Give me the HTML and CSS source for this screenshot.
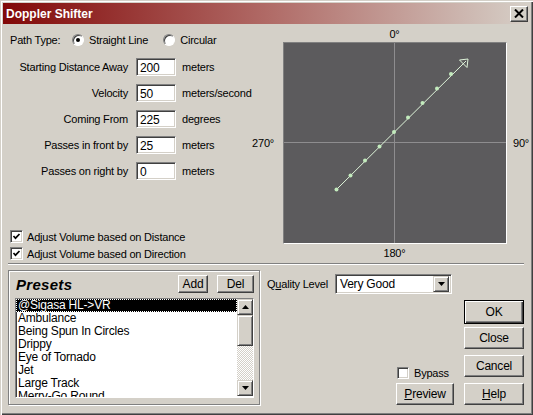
FILE: index.html
```html
<!DOCTYPE html>
<html lang="en">
<head>
    <meta charset="UTF-8">
    <title>Doppler Shifter</title>
    <link rel="stylesheet" href="styles.css">
</head>
<body>
    <div class="window">
        <div class="titlebar">
            <span class="title">Doppler Shifter</span>
            <span class="close-btn">
                <svg width="10" height="9" viewBox="0 0 10 9"><path d="M1 0.5 L9 8.5 M9 0.5 L1 8.5" stroke="#000" stroke-width="2"/></svg>
            </span>
        </div>

        <div class="content">
            <div class="top">
                <div class="settings">
                    <div class="path-row">
                        <span class="path-label">Path Type:</span>
                        <span class="radio"><span class="radio-box checked"></span>Straight Line</span>
                        <span class="radio"><span class="radio-box"></span>Circular</span>
                    </div>

                    <div class="fields">
                        <span class="field-label">Starting Distance Away</span>
                        <span class="input">200</span>
                        <span class="unit">meters</span>

                        <span class="field-label">Velocity</span>
                        <span class="input">50</span>
                        <span class="unit">meters/second</span>

                        <span class="field-label">Coming From</span>
                        <span class="input">225</span>
                        <span class="unit">degrees</span>

                        <span class="field-label">Passes in front by</span>
                        <span class="input">25</span>
                        <span class="unit">meters</span>

                        <span class="field-label">Passes on right by</span>
                        <span class="input">0</span>
                        <span class="unit">meters</span>
                    </div>

                    <div class="checks">
                        <div class="check"><span class="check-box checked"><svg width="9" height="9" viewBox="0 0 9 9"><polyline points="1.5,4 3.5,6.2 7.5,2" fill="none" stroke="#000" stroke-width="1.7"/></svg></span>Adjust Volume based on Distance</div>
                        <div class="check"><span class="check-box checked"><svg width="9" height="9" viewBox="0 0 9 9"><polyline points="1.5,4 3.5,6.2 7.5,2" fill="none" stroke="#000" stroke-width="1.7"/></svg></span>Adjust Volume based on Direction</div>
                    </div>
                </div>

                <div class="compass">
                    <span></span>
                    <span class="deg deg-top">0°</span>
                    <span></span>

                    <span class="deg deg-left">270°</span>
                    <div class="graph">
                        <svg width="222" height="200" viewBox="0 0 222 200">
                            <line x1="110.5" y1="0" x2="110.5" y2="200" stroke="#8e8d8f"/>
                            <line x1="0" y1="99.5" x2="222" y2="99.5" stroke="#8e8d8f"/>
                            <line x1="52.5" y1="146.5" x2="182" y2="18" stroke="#dff5da"/>
                            <polygon points="184,16 175.5,17 183,24.5" fill="none" stroke="#dff5da"/>
                            <g fill="#c3ebbd">
                                <circle cx="52.5" cy="146.5" r="2"/>
                                <circle cx="66.5" cy="132.5" r="2"/>
                                <circle cx="81" cy="117.5" r="2"/>
                                <circle cx="95.5" cy="103.5" r="2"/>
                                <circle cx="110" cy="89" r="2"/>
                                <circle cx="124" cy="74.5" r="2"/>
                                <circle cx="138.5" cy="60" r="2"/>
                                <circle cx="153" cy="45.5" r="2"/>
                                <circle cx="167" cy="31" r="2"/>
                            </g>
                        </svg>
                    </div>
                    <span class="deg deg-right">90°</span>

                    <span></span>
                    <span class="deg deg-bottom">180°</span>
                    <span></span>
                </div>
            </div>

            <div class="separator"></div>

            <div class="bottom">
                <div class="presets">
                    <div class="presets-head">
                        <span class="presets-title">Presets</span>
                        <span class="btn btn-add">Add</span>
                        <span class="btn btn-del">Del</span>
                    </div>
                    <div class="listbox">
                        <ul class="items">
                            <li class="selected">@Sigasa HL-&gt;VR</li>
                            <li>Ambulance</li>
                            <li>Being Spun In Circles</li>
                            <li>Drippy</li>
                            <li>Eye of Tornado</li>
                            <li>Jet</li>
                            <li>Large Track</li>
                            <li>Merry-Go Round</li>
                        </ul>
                        <div class="scrollbar">
                            <span class="scroll-btn">
                                <svg width="7" height="4" viewBox="0 0 7 4"><polygon points="3.5,0 7,4 0,4" fill="#000"/></svg>
                            </span>
                            <span class="scroll-thumb"></span>
                            <span class="scroll-track"></span>
                            <span class="scroll-btn">
                                <svg width="7" height="4" viewBox="0 0 7 4"><polygon points="0,0 7,0 3.5,4" fill="#000"/></svg>
                            </span>
                        </div>
                    </div>
                </div>

                <div class="controls">
                    <div class="quality-row">
                        <span class="quality-label">Q<u>u</u>ality Level</span>
                        <div class="select">
                            <span class="select-value">Very Good</span>
                            <span class="select-btn">
                                <svg width="7" height="4" viewBox="0 0 7 4"><polygon points="0,0 7,0 3.5,4" fill="#000"/></svg>
                            </span>
                        </div>
                    </div>

                    <div class="actions">
                        <div class="preview-col">
                            <div class="check bypass"><span class="check-box"></span>Bypass</div>
                            <span class="btn btn-preview"><u>P</u>review</span>
                        </div>
                        <div class="buttons">
                            <span class="btn btn-default">OK</span>
                            <span class="btn btn-close">Close</span>
                            <span class="btn btn-cancel">Cancel</span>
                            <span class="btn btn-help"><u>H</u>elp</span>
                        </div>
                    </div>
                </div>
            </div>
        </div>
    </div>
</body>
</html>
```

FILE: styles.css
```css
* {
    margin: 0;
    padding: 0;
    box-sizing: border-box;
}

body {
    width: 533px;
    height: 415px;
    overflow: hidden;
    background: #d4d0c8;
    color: #000;
    font-family: 'Liberation Sans', Arial, sans-serif;
    font-size: 11px;
    letter-spacing: -0.2px;
}

.window {
    width: 533px;
    height: 415px;
    padding: 3px;
    background: #d4d0c8;
    box-shadow: inset 1px 1px 0 #d4d0c8, inset 2px 2px 0 #fff,
                inset -1px -1px 0 #404040, inset -2px -2px 0 #808080;
}

/* title bar */
.titlebar {
    height: 21px;
    display: flex;
    align-items: center;
    justify-content: space-between;
    padding: 0 2px 0 3px;
    background: linear-gradient(to right, #820808, #b06a66 50%, #d6d0c8);
}

.title {
    color: #fff;
    font-weight: bold;
    font-size: 12px;
    letter-spacing: 0;
}

.close-btn {
    width: 18px;
    height: 16px;
    display: flex;
    align-items: center;
    justify-content: center;
    background: #d4d0c8;
    border: 1px solid;
    border-color: #fff #404040 #404040 #fff;
    box-shadow: inset -1px -1px 0 #808080;
}

.content {
    padding: 0 6px 0 5px;
}

.top {
    display: flex;
}

/* left settings */
.settings {
    width: 239px;
}

.path-row {
    display: flex;
    align-items: center;
    height: 14px;
    margin-top: 9px;
    padding-left: 2px;
}

.path-label {
    width: 62px;
}

.radio {
    display: flex;
    align-items: center;
    margin-right: 15px;
}

.radio-box {
    position: relative;
    width: 12px;
    height: 12px;
    margin-right: 5px;
    border-radius: 50%;
    background: #fff;
    border: 1px solid;
    border-color: #808080 #fff #fff #808080;
    box-shadow: inset 1px 1px 0 #404040;
}

.radio-box.checked::after {
    content: "";
    position: absolute;
    left: 3px;
    top: 3px;
    width: 4px;
    height: 4px;
    border-radius: 50%;
    background: #000;
}

.fields {
    display: grid;
    grid-template-columns: 120px 40px auto;
    grid-auto-rows: 18px;
    column-gap: 8px;
    row-gap: 8px;
    align-items: center;
    margin-top: 11px;
}

.field-label {
    text-align: right;
}

.input {
    height: 18px;
    padding: 2px 0 0 3px;
    background: #fff;
    border: 1px solid;
    border-color: #808080 #fff #fff #808080;
    box-shadow: inset 1px 1px 0 #404040, inset -1px -1px 0 #d4d0c8;
    font-size: 12px;
}

.unit {
    margin-left: -2px;
}

.checks {
    margin-top: 48px;
}

.check {
    display: flex;
    align-items: center;
    height: 17px;
    padding-left: 2px;
}

.check-box {
    display: flex;
    align-items: center;
    justify-content: center;
    width: 13px;
    height: 13px;
    margin-right: 4px;
    background: #fff;
    border: 1px solid;
    border-color: #808080 #fff #fff #808080;
    box-shadow: inset 1px 1px 0 #404040, inset -1px -1px 0 #d4d0c8;
}

/* compass graph */
.compass {
    display: grid;
    grid-template-columns: 36px 224px 27px;
    grid-template-rows: 18px 202px 18px;
}

.deg {
    display: flex;
    align-items: center;
}

.deg-top,
.deg-bottom {
    justify-content: center;
    padding-right: 1px;
}

.deg-top {
    padding-top: 2px;
}

.deg-left {
    justify-content: flex-end;
    padding-right: 9px;
}

.deg-right {
    padding-left: 6px;
}

.graph {
    background: #5c5b5d;
    border: 1px solid;
    border-color: #808080 #fff #fff #808080;
}

.graph svg {
    display: block;
}

.separator {
    margin-top: 1px;
    border-top: 1px solid #808080;
    border-bottom: 1px solid #fff;
}

/* bottom half */
.bottom {
    display: flex;
}

.presets {
    width: 252px;
    margin-top: 5px;
    padding: 4px 5px 5px 6px;
    border: 1px solid #808080;
    box-shadow: 1px 1px 0 #fff, inset 1px 1px 0 #fff;
}

.presets-head {
    display: flex;
    align-items: center;
    height: 18px;
}

.presets-title {
    flex: 1;
    padding-left: 1px;
    font-size: 15px;
    font-weight: bold;
    font-style: italic;
    letter-spacing: 0.3px;
}

.btn {
    display: flex;
    align-items: center;
    justify-content: center;
    background: #d4d0c8;
    border: 1px solid;
    border-color: #fff #404040 #404040 #fff;
    box-shadow: inset -1px -1px 0 #808080;
    font-size: 12px;
}

.btn-add {
    width: 30px;
    height: 18px;
}

.btn-del {
    width: 37px;
    height: 18px;
    margin-left: 9px;
}

.listbox {
    display: flex;
    height: 100px;
    margin-top: 5px;
    background: #fff;
    border: 1px solid;
    border-color: #808080 #fff #fff #808080;
    box-shadow: inset 1px 1px 0 #404040;
    overflow: hidden;
}

.items {
    flex: 1;
    list-style: none;
    overflow: hidden;
}

.items li {
    height: 13px;
    line-height: 13px;
    padding-left: 2px;
    font-size: 12px;
    white-space: nowrap;
}

.items li.selected {
    background: #000;
    color: #fff;
    outline: 1px dotted #fff;
    outline-offset: -1px;
}

.scrollbar {
    display: flex;
    flex-direction: column;
    width: 16px;
    padding-bottom: 1px;
}

.scroll-btn {
    display: flex;
    align-items: center;
    justify-content: center;
    height: 16px;
    background: #d4d0c8;
    border: 1px solid;
    border-color: #d4d0c8 #404040 #404040 #d4d0c8;
    box-shadow: inset 1px 1px 0 #fff, inset -1px -1px 0 #808080;
}

.scroll-thumb {
    height: 31px;
    background: #d4d0c8;
    border: 1px solid;
    border-color: #d4d0c8 #404040 #404040 #d4d0c8;
    box-shadow: inset 1px 1px 0 #fff, inset -1px -1px 0 #808080;
}

.scroll-track {
    flex: 1;
    background: repeating-conic-gradient(#fff 0 25%, #d4d0c8 0 50%) 0 0 / 2px 2px;
}

.controls {
    flex: 1;
    margin-left: 7px;
}

.quality-row {
    display: flex;
    align-items: center;
    margin-top: 9px;
    height: 20px;
}

.quality-label {
    width: 68px;
}

.select {
    display: flex;
    align-items: center;
    width: 117px;
    height: 20px;
    padding: 2px;
    background: #fff;
    border: 1px solid;
    border-color: #808080 #fff #fff #808080;
    box-shadow: inset 1px 1px 0 #404040, inset -1px -1px 0 #d4d0c8;
}

.select-value {
    flex: 1;
    padding-left: 2px;
    font-size: 12px;
}

.select-btn {
    display: flex;
    align-items: center;
    justify-content: center;
    width: 16px;
    height: 16px;
    background: #d4d0c8;
    border: 1px solid;
    border-color: #d4d0c8 #404040 #404040 #d4d0c8;
    box-shadow: inset 1px 1px 0 #fff, inset -1px -1px 0 #808080;
}

.actions {
    display: flex;
    justify-content: flex-end;
    margin-top: 6px;
}

.preview-col {
    display: flex;
    flex-direction: column;
    align-self: flex-end;
    margin-right: 10px;
}

.bypass {
    height: 13px;
    margin-bottom: 4px;
    padding-left: 1px;
}

.bypass .check-box {
    width: 12px;
    height: 12px;
    margin-right: 5px;
}

.btn-preview {
    width: 58px;
    height: 22px;
}

.buttons {
    display: flex;
    flex-direction: column;
    width: 60px;
}

.btn-default {
    height: 24px;
    border: 1px solid #000;
    box-shadow: inset 1px 1px 0 #fff, inset -1px -1px 0 #404040, inset -2px -2px 0 #808080;
}

.btn-close,
.btn-cancel,
.btn-help {
    height: 22px;
}

.btn-close {
    margin-top: 3px;
}

.btn-cancel,
.btn-help {
    margin-top: 6px;
}
```
